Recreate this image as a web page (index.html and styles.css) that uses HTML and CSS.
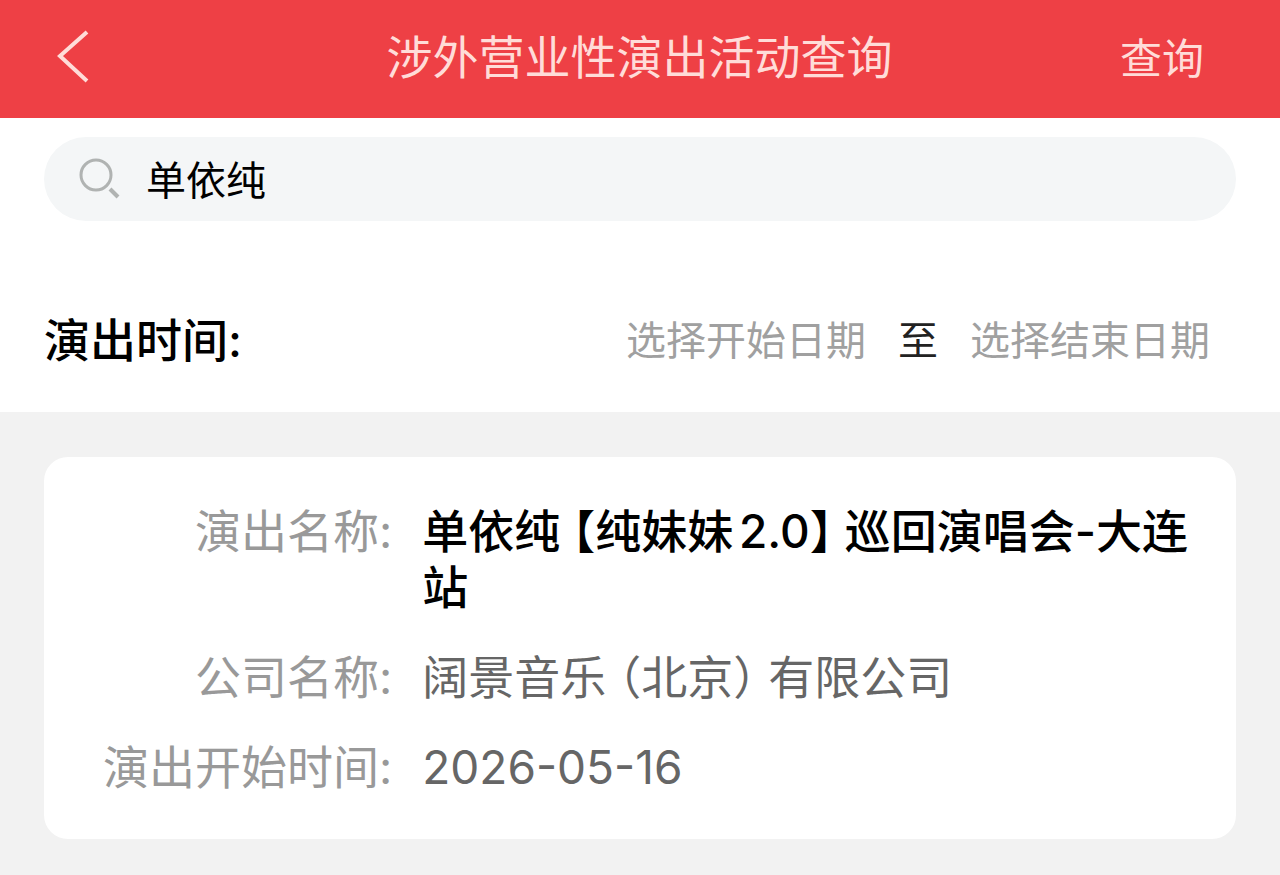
FILE: index.html
```html
<!DOCTYPE html>
<html lang="zh-CN">
<head>
    <meta charset="UTF-8">
    <meta name="viewport" content="width=device-width, initial-scale=1.0">
    <title>涉外营业性演出活动查询</title>
    <link rel="stylesheet" href="styles.css">
</head>
<body>
    <header class="navbar">
        <button class="back" type="button" aria-label="返回">
            <svg width="32" height="54" viewBox="0 0 32 54" fill="none" stroke="currentColor" stroke-width="4">
                <path d="M30 2 L3 26 L30 51"/>
            </svg>
        </button>
        <h1 class="navbar-title">涉外营业性演出活动查询</h1>
        <button class="query" type="submit" form="searchForm">查询</button>
    </header>

    <form class="filters" id="searchForm">
        <label class="search-box">
            <svg class="search-icon" width="42" height="42" viewBox="0 0 42 42" fill="none" stroke="currentColor">
                <circle cx="18" cy="17" r="15" stroke-width="3"/>
                <path d="M32 31 L40 39" stroke-width="4"/>
            </svg>
            <input type="text" name="keyword" value="单依纯" aria-label="搜索">
        </label>

        <div class="date-row">
            <h2 class="date-title">演出时间:</h2>
            <div class="date-range">
                <button type="button" class="date-btn">选择开始日期</button>
                <span class="date-to">至</span>
                <button type="button" class="date-btn">选择结束日期</button>
            </div>
        </div>
    </form>

    <main class="results">
        <article class="card">
            <dl class="info">
                <dt>演出名称:</dt>
                <dd class="name">单依纯<span class="open">【</span>纯妹妹2.0<span class="close">】</span>巡回演唱会-大连站</dd>
                <dt>公司名称:</dt>
                <dd>阔景音乐<span class="open">（</span>北京<span class="close">）</span>有限公司</dd>
                <dt>演出开始时间:</dt>
                <dd>2026-05-16</dd>
            </dl>
        </article>
    </main>
</body>
</html>
```
FILE: styles.css
```css
* {
    margin: 0;
    padding: 0;
    box-sizing: border-box;
}

body {
    min-height: 100vh;
    background: #f2f2f2;
    color: #000;
    font-family: Inter, "Noto Sans CJK SC", sans-serif;
    font-size: 46px;
    line-height: 56px;
}

button,
input {
    border: none;
    background: none;
    font: inherit;
    color: inherit;
}

button {
    cursor: pointer;
}

/* 顶部导航 */
.navbar {
    display: grid;
    grid-template-columns: 1fr auto 1fr;
    align-items: center;
    height: 118px;
    padding: 0 76px 4px 57px;
    background: #ee4045;
    color: #ffdcd8;
}

.back {
    justify-self: start;
    height: 54px;
}

.back svg {
    display: block;
}

.navbar-title {
    padding-left: 18px;
    font-size: 46px;
    font-weight: 400;
}

.query {
    justify-self: end;
    padding-top: 4px;
    font-size: 42px;
}

/* 搜索条件 */
.filters {
    padding: 19px 44px 43px;
    background: #fff;
}

.search-box {
    display: flex;
    align-items: center;
    gap: 26px;
    height: 84px;
    padding: 0 34px;
    border-radius: 42px;
    background: #f4f6f7;
}

.search-icon {
    flex: none;
    color: #b0b3b2;
}

.search-box input {
    flex: 1;
    min-width: 0;
    padding-top: 4px;
    font-size: 40px;
    outline: none;
}

.date-row {
    display: flex;
    justify-content: space-between;
    align-items: center;
    margin-top: 90px;
}

.date-title {
    font-size: 46px;
    font-weight: 500;
}

.date-range {
    display: flex;
    align-items: center;
    gap: 32px;
    padding: 2px 26px 0 0;
    font-size: 40px;
}

.date-btn {
    color: #a0a0a0;
}

.date-to {
    color: #222;
}

/* 查询结果 */
.results {
    padding: 45px 44px;
}

.card {
    padding: 46px 44px 44px 59px;
    border-radius: 24px;
    background: #fff;
}

.info {
    display: grid;
    grid-template-columns: auto 1fr;
    gap: 34px 30px;
}

.info dt {
    color: #999;
    text-align: right;
}

.info dd {
    color: #666;
    text-autospace: normal;
}

.info .name {
    color: #000;
    font-weight: 500;
}

/* 括号只占半个字宽 */
.open,
.close {
    font-feature-settings: "halt";
}

.open {
    margin-left: 12px;
}

.close {
    margin-right: 12px;
}
```
